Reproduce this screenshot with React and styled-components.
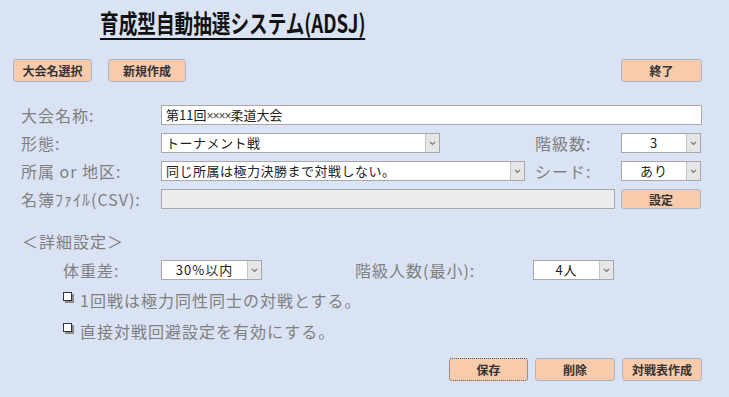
import React from "react";
import styled, { createGlobalStyle } from "styled-components";

const GlobalStyle = createGlobalStyle`
  html, body {
    margin: 0;
    padding: 0;
    background: #dae3f3;
  }
  body {
    font-family: "Noto Sans CJK JP", "Liberation Sans", sans-serif;
  }
`;

const Page = styled.div`
  width: 729px;
  height: 397px;
  box-sizing: border-box;
  background: #dae3f3;
  padding: 6px 27px 0 13px;
  overflow: hidden;
`;

const TitleWrap = styled.div`
  height: 40px;
  padding-left: 87px;
`;

const Title = styled.h1`
  display: inline-block;
  margin: 0;
  font-size: 25px;
  line-height: 32px;
  font-weight: 700;
  color: #111;
  transform: scaleX(0.745);
  transform-origin: left center;
  white-space: nowrap;
  border-bottom: 2px solid #111;
`;

const TopBar = styled.div`
  display: flex;
  justify-content: space-between;
  margin-top: 13px;
`;

const Group = styled.div`
  display: flex;
  gap: 16px;
`;

const Button = styled.button`
  width: ${(p) => p.$w || 80}px;
  height: ${(p) => p.$h || 23}px;
  box-sizing: border-box;
  background: #f8cbad;
  border: 1px solid ${(p) => (p.$focus ? "#555" : "#aab4c6")};
  border-style: ${(p) => (p.$focus ? "dotted" : "solid")};
  border-radius: 3px;
  font-family: "Noto Sans CJK JP", sans-serif;
  font-size: 12px;
  font-weight: 700;
  color: #333;
  padding: 0;
  margin-left: ${(p) => p.$ml || 0}px;
  cursor: pointer;
`;

const Form = styled.div`
  display: flex;
  flex-direction: column;
  gap: 8px;
  margin-top: 23px;
  padding-left: 8px;
`;

const Row = styled.div`
  display: flex;
  align-items: center;
  height: 20px;
`;

const Label = styled.div`
  width: ${(p) => p.$w || 140}px;
  margin-left: ${(p) => p.$ml || 0}px;
  flex-shrink: 0;
  font-size: 16px;
  letter-spacing: 1px;
  color: #7f7f7f;
  white-space: nowrap;
`;

const TextBox = styled.div`
  width: ${(p) => p.$w}px;
  height: 20px;
  box-sizing: border-box;
  background: ${(p) => (p.$disabled ? "#ececec" : "#fff")};
  border: 1px solid #a8a8a8;
  font-size: 13px;
  line-height: 18px;
  padding-left: 4px;
  color: #222;
  white-space: nowrap;
  overflow: hidden;
`;

const Small = styled.span`
  font-family: "Liberation Sans", sans-serif;
  font-size: 12px;
  letter-spacing: -1px;
  color: #444;
`;

const ComboBox = styled.div`
  display: flex;
  width: ${(p) => p.$w}px;
  height: 20px;
  box-sizing: border-box;
  background: #fff;
  border: 1px solid #a8a8a8;
  margin-left: ${(p) => p.$ml || 0}px;
  flex-shrink: 0;
`;

const ComboText = styled.div`
  flex: 1;
  font-size: 13px;
  line-height: 18px;
  padding-left: ${(p) => (p.$center ? 0 : 4)}px;
  text-align: ${(p) => (p.$center ? "center" : "left")};
  letter-spacing: ${(p) => (p.$center ? 1 : 0.5)}px;
  color: #222;
  white-space: nowrap;
  overflow: hidden;
`;

const Arrow = styled.div`
  width: 13px;
  background: #e6e6e6;
  border-left: 1px solid #c4c4c4;
  display: flex;
  align-items: center;
  justify-content: center;
`;

const Combo = ({ w, ml, center, children }) => (
  <ComboBox $w={w} $ml={ml}>
    <ComboText $center={center}>{children}</ComboText>
    <Arrow>
      <svg width="7" height="5" viewBox="0 0 7 5">
        <path d="M1 1 L3.5 3.5 L6 1" stroke="#777" strokeWidth="1.2" fill="none" />
      </svg>
    </Arrow>
  </ComboBox>
);

const SectionTitle = styled.div`
  margin-top: 22px;
  padding-left: 9px;
  font-size: 16px;
  letter-spacing: 1px;
  line-height: 20px;
  color: #7f7f7f;
`;

const Detail = styled.div`
  padding-left: 50px;
  margin-top: 9px;
  display: flex;
  flex-direction: column;
`;

const CheckRow = styled.div`
  display: flex;
  align-items: center;
  gap: 8px;
  height: 22px;
  margin-top: ${(p) => p.$mt || 0}px;
  font-size: 16px;
  letter-spacing: 1px;
  color: #7f7f7f;
`;

const Box = styled.span`
  width: 7px;
  height: 7px;
  border: 1px solid #333;
  background: #fff;
  box-shadow: 2px 2px 0 #8a8a8a;
  margin-top: -7px;
  flex-shrink: 0;
`;

const Footer = styled.div`
  display: flex;
  justify-content: flex-end;
  gap: 7px;
  margin-top: 16px;
`;

export default function App() {
  return (
    <Page>
      <GlobalStyle />
      <TitleWrap>
        <Title>育成型自動抽選システム(ADSJ)</Title>
      </TitleWrap>
      <TopBar>
        <Group>
          <Button $w={79}>大会名選択</Button>
          <Button $w={78}>新規作成</Button>
        </Group>
        <Button $w={81}>終了</Button>
      </TopBar>

      <Form>
        <Row>
          <Label>大会名称:</Label>
          <TextBox $w={541}>
            第11回<Small>××××</Small>柔道大会
          </TextBox>
        </Row>
        <Row>
          <Label>形態:</Label>
          <Combo w={279}>トーナメント戦</Combo>
          <Label $w={86} $ml={95}>階級数:</Label>
          <Combo w={80} center>3</Combo>
        </Row>
        <Row>
          <Label>所属 or 地区:</Label>
          <Combo w={364}>同じ所属は極力決勝まで対戦しない。</Combo>
          <Label $w={86} $ml={10}>シード:</Label>
          <Combo w={80} center>あり</Combo>
        </Row>
        <Row>
          <Label>名簿ﾌｧｲﾙ(CSV):</Label>
          <TextBox $w={454} $disabled />
          <Button $w={80} $h={20} $ml={6}>設定</Button>
        </Row>
      </Form>

      <SectionTitle>＜詳細設定＞</SectionTitle>

      <Detail>
        <Row>
          <Label $w={98}>体重差:</Label>
          <Combo w={101} center>30%以内</Combo>
          <Label $w={178} $ml={93}>階級人数(最小):</Label>
          <Combo w={81} center>4人</Combo>
        </Row>
        <CheckRow $mt={9}>
          <Box />
          1回戦は極力同性同士の対戦とする。
        </CheckRow>
        <CheckRow $mt={9}>
          <Box />
          直接対戦回避設定を有効にする。
        </CheckRow>
      </Detail>

      <Footer>
        <Button $w={79} $focus>保存</Button>
        <Button $w={80}>削除</Button>
        <Button $w={80}>対戦表作成</Button>
      </Footer>
    </Page>
  );
}
